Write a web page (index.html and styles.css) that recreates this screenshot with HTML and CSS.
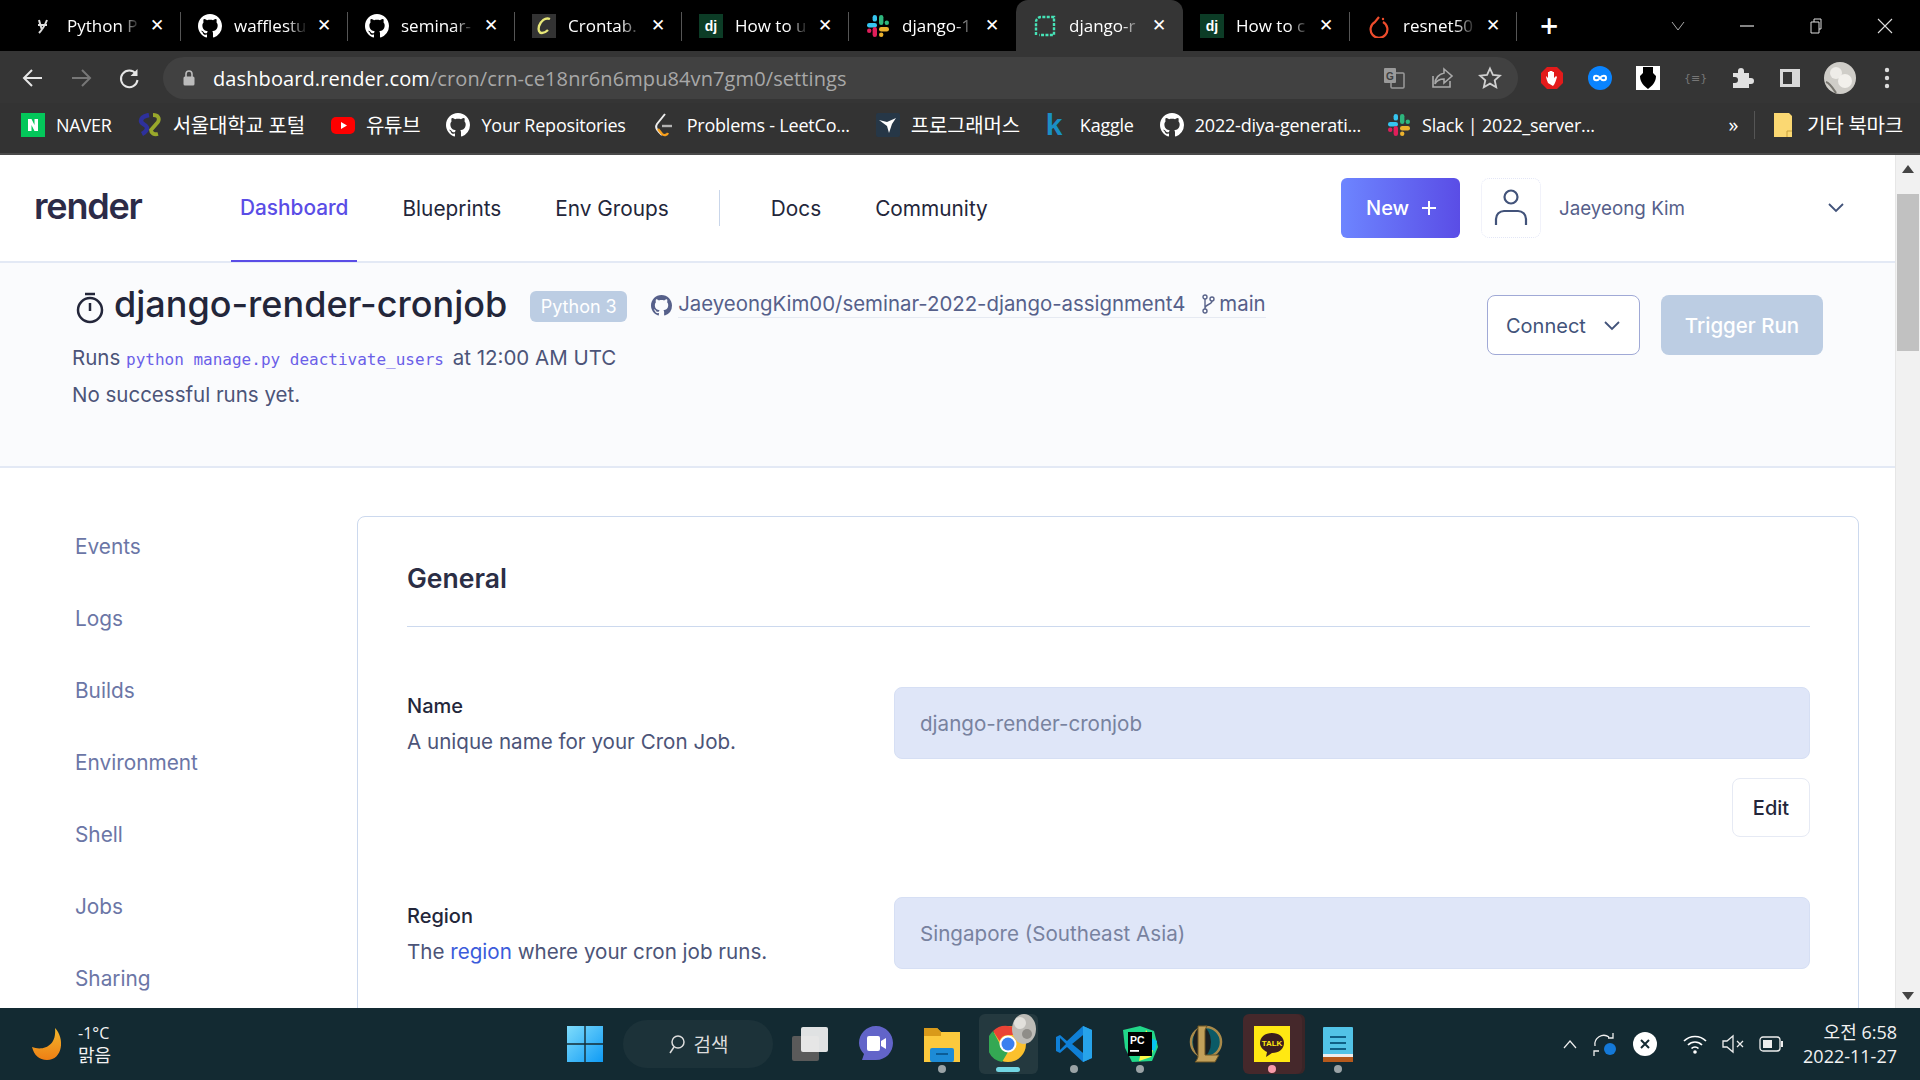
FILE: index.html
```html
<!DOCTYPE html><html lang="en">
<head>
  <title>django-render-cronjob</title>
  <meta charset="UTF-8">
  <link rel="stylesheet" href="styles.css">
</head>
<body>
<svg class="defs" width="0" height="0">
  <symbol id="gh" viewBox="0 0 16 16"><path fill="currentColor" d="M8 0C3.58 0 0 3.58 0 8c0 3.54 2.29 6.53 5.47 7.59.4.07.55-.17.55-.38 0-.19-.01-.82-.01-1.49-2.01.37-2.53-.49-2.69-.94-.09-.23-.48-.94-.82-1.13-.28-.15-.68-.52-.01-.53.63-.01 1.08.58 1.23.82.72 1.21 1.87.87 2.33.66.07-.52.28-.87.51-1.07-1.78-.2-3.64-.89-3.64-3.95 0-.87.31-1.59.82-2.15-.08-.2-.36-1.02.08-2.12 0 0 .67-.21 2.2.82.64-.18 1.32-.27 2-.27.68 0 1.36.09 2 .27 1.53-1.04 2.2-.82 2.2-.82.44 1.1.16 1.92.08 2.12.51.56.82 1.27.82 2.15 0 3.07-1.87 3.75-3.65 3.95.29.25.54.73.54 1.48 0 1.07-.01 1.93-.01 2.2 0 .21.15.46.55.38A8.013 8.013 0 0016 8c0-4.42-3.58-8-8-8z"/></symbol>
  <symbol id="slack" viewBox="0 0 24 24">
    <rect x="1" y="9" width="10" height="4.4" rx="2.2" fill="#36c5f0"/><rect x="6.6" y="1" width="4.4" height="6.6" rx="2.2" fill="#36c5f0"/>
    <rect x="13" y="1" width="4.4" height="10" rx="2.2" fill="#2eb67d"/><rect x="18.6" y="6.6" width="4.4" height="4.4" rx="2.2" fill="#2eb67d"/>
    <rect x="13" y="13" width="10" height="4.4" rx="2.2" fill="#ecb22e"/><rect x="13" y="18.6" width="4.4" height="4.4" rx="2.2" fill="#ecb22e"/>
    <rect x="6.6" y="13" width="4.4" height="10" rx="2.2" fill="#e01e5a"/><rect x="1" y="14.6" width="4.4" height="4.4" rx="2.2" fill="#e01e5a"/>
  </symbol>
</svg>

<div class="tabstrip">
  <div class="tab">
    <svg class="fav" viewBox="0 0 24 24"><path d="M8 6c1 4 2 7 3 10M16 6c-2 5-5 10-8 13M7 11h9" fill="none" stroke="#ddd" stroke-width="2"/></svg>
    <span class="tab-title">Python P</span><span class="tab-x">✕</span>
  </div>
  <div class="tab">
    <svg class="fav gh"><use href="#gh"/></svg>
    <span class="tab-title">wafflestu</span><span class="tab-x">✕</span>
  </div>
  <div class="tab">
    <svg class="fav gh"><use href="#gh"/></svg>
    <span class="tab-title">seminar-</span><span class="tab-x">✕</span>
  </div>
  <div class="tab">
    <svg class="fav" viewBox="0 0 24 24"><rect width="24" height="24" fill="#333"/><path d="M18 5c-5-2-9 2-11 7-1 4 0 7 3 7 3 0 5-2 6-3" fill="none" stroke="#e8e878" stroke-width="2.4"/></svg>
    <span class="tab-title">Crontab.</span><span class="tab-x">✕</span>
  </div>
  <div class="tab">
    <svg class="fav" viewBox="0 0 24 24"><rect width="24" height="24" fill="#0c3c26"/><text x="12" y="17" text-anchor="middle" font-family="Liberation Sans" font-weight="700" font-size="14" fill="#fff">dj</text></svg>
    <span class="tab-title">How to u</span><span class="tab-x">✕</span>
  </div>
  <div class="tab tab-noline">
    <svg class="fav"><use href="#slack"/></svg>
    <span class="tab-title">django-1</span><span class="tab-x">✕</span>
  </div>
  <div class="tab tab-active">
    <svg class="fav" viewBox="0 0 24 24"><path d="M3 21V8a5 5 0 015-5h13v18H6" fill="none" stroke="#46e3b7" stroke-width="2.4" stroke-dasharray="3 1.4"/></svg>
    <span class="tab-title">django-r</span><span class="tab-x">✕</span>
  </div>
  <div class="tab">
    <svg class="fav" viewBox="0 0 24 24"><rect width="24" height="24" fill="#0c3c26"/><text x="12" y="17" text-anchor="middle" font-family="Liberation Sans" font-weight="700" font-size="14" fill="#fff">dj</text></svg>
    <span class="tab-title">How to c</span><span class="tab-x">✕</span>
  </div>
  <div class="tab">
    <svg class="fav" viewBox="0 0 24 24"><path d="M16 8a8.4 8.4 0 11-8 0l4-5" fill="none" stroke="#ee4c2c" stroke-width="2.2"/><circle cx="16" cy="5" r="1.2" fill="#ee4c2c"/></svg>
    <span class="tab-title">resnet50</span><span class="tab-x">✕</span>
  </div>
  <div class="tab-plus">+</div>
  <div class="win-btns">
    <svg width="18" height="18" viewBox="0 0 18 18"><path d="M3 5l6 8 6-8" fill="none" stroke="#aaa"/></svg>
    <svg width="18" height="18" viewBox="0 0 18 18"><path d="M2 9h14" stroke="#ddd" stroke-width="1.2"/></svg>
    <svg width="18" height="18" viewBox="0 0 18 18"><path d="M4 5h8v11H4zM7 5V2h7v10h-2" fill="none" stroke="#ddd"/></svg>
    <svg width="18" height="18" viewBox="0 0 18 18"><path d="M2 2l14 14M16 2L2 16" stroke="#ddd" stroke-width="1.1"/></svg>
  </div>
</div>

<div class="toolbar">
  <svg class="tool" viewBox="0 0 24 24"><path d="M21 12H4m7-8l-8 8 8 8" fill="none" stroke="#e6e6e6" stroke-width="2"/></svg>
  <svg class="tool" viewBox="0 0 24 24"><path d="M3 12h17m-7-8l8 8-8 8" fill="none" stroke="#777" stroke-width="2"/></svg>
  <svg class="tool" viewBox="0 0 24 24"><path d="M19 8a8.3 8.3 0 101.5 6" fill="none" stroke="#e6e6e6" stroke-width="2"/><path d="M20.5 3v7h-7z" fill="#e6e6e6"/></svg>
  <div class="omnibox">
    <svg class="lock" viewBox="0 0 14 18"><path d="M4 8V5a3 3 0 016 0v3" fill="none" stroke="#bbb" stroke-width="1.6"/><rect x="1.5" y="7.5" width="11" height="9" rx="1.5" fill="#bbb"/></svg>
    <span class="url"><b>dashboard.render.com</b>/cron/crn-ce18nr6n6mpu84vn7gm0/settings</span>
    <svg class="omni-icon" viewBox="0 0 24 24"><rect x="2" y="2" width="12" height="15" rx="1" fill="#9a9a9a"/><rect x="9" y="7" width="13" height="15" rx="1" fill="none" stroke="#9a9a9a" stroke-width="1.5"/><text x="8" y="14" font-size="10" font-family="Liberation Sans" font-weight="700" text-anchor="middle" fill="#404040">G</text></svg>
    <svg class="omni-icon" viewBox="0 0 24 24"><path d="M3 10v11h17v-6" fill="none" stroke="#aaa" stroke-width="1.6"/><path d="M14 3l8 7-8 7v-4c-4 0-7 1-9 5 0-6 4-10 9-11z" fill="none" stroke="#aaa" stroke-width="1.6"/></svg>
    <svg class="omni-icon" viewBox="0 0 24 24"><path d="M12 2.5l2.9 6.4 7 .7-5.2 4.7 1.5 6.9-6.2-3.6-6.2 3.6 1.5-6.9L2.100 9.600l7-.7z" fill="none" stroke="#d0d0d0" stroke-width="1.8"/></svg>
  </div>
  <div class="ext-icons">
    <svg class="ext" viewBox="0 0 24 24"><path d="M7 1h10l6 6v10l-6 6H7l-6-6V7z" fill="#e31b1b"/><path d="M8 17c-1-3-2-5-2-7l2 2V6h1.500v4-5H11v5-5h1.500v5-4H14v6l2-2 1 1c-1 3-2 7-4 9z" fill="#fff"/></svg>
    <svg class="ext" viewBox="0 0 24 24"><circle cx="12" cy="12" r="12" fill="#0a84ff"/><path d="M12 12c-2-3-6-3-6 0s4 3 6 0 6-3 6 0-4 3-6 0z" fill="none" stroke="#fff" stroke-width="2"/></svg>
    <svg class="ext" viewBox="0 0 24 24"><rect width="24" height="24" fill="#fff"/><path d="M7 1h10v6l3 3c0 6-4 10-8 13-4-3-8-7-8-13l3-3z" fill="#000"/></svg>
    <span class="ext-json">{≡}</span>
    <svg class="ext" viewBox="0 0 24 24"><path d="M3 7h5V5a3 3 0 016 0v2h5v5h2a3 3 0 010 6h-2v4H3v-5h2a3 3 0 000-6H3z" fill="#e0e0e0"/></svg>
    <svg class="ext" viewBox="0 0 24 24"><rect x="2" y="3" width="20" height="18" fill="#d8d8d8"/><rect x="5" y="6" width="9" height="12" fill="#353535"/></svg>
    <svg class="ext-avatar" viewBox="0 0 32 32"><circle cx="16" cy="16" r="16" fill="#cfcdc8"/><circle cx="12" cy="11" r="6" fill="#eeece8"/><circle cx="21" cy="19" r="7" fill="#f2f0ec"/><path d="M2 20c4 1 8 8 10 11" stroke="#77756f" stroke-width="2" fill="none"/></svg>
    <svg class="ext-dots" viewBox="0 0 6 24"><circle cx="3" cy="4" r="2.200" fill="#ddd"/><circle cx="3" cy="12" r="2.200" fill="#ddd"/><circle cx="3" cy="20" r="2.200" fill="#ddd"/></svg>
  </div>
</div>

<div class="bookmarks">
  <div class="bm"><svg class="bm-icon" viewBox="0 0 24 24"><rect width="24" height="24" fill="#03c75a"/><path d="M7 6h3.500l3 6V6H17v12h-3.500l-3-6v6H7z" fill="#fff"/></svg>NAVER</div>
  <div class="bm"><svg class="bm-icon" viewBox="0 0 24 24"><path d="M11 2C6 3 3 5 3 8s6 4 6 7-3 5-5 6" fill="none" stroke="#2e319c" stroke-width="4.500"/><path d="M15 2c5 0 7 3 5 7l-7 8c0 3 3 5 7 4" fill="none" stroke="#99a82b" stroke-width="3.800"/></svg><span class="ko">서울대학교 포털</span></div>
  <div class="bm"><svg class="bm-icon" viewBox="0 0 24 24"><rect y="4" width="24" height="17" rx="5" fill="#f00"/><path d="M10 9l6 3.500-6 3.500z" fill="#fff"/></svg><span class="ko">유튜브</span></div>
  <div class="bm"><svg class="bm-icon gh"><use href="#gh"/></svg>Your Repositories</div>
  <div class="bm"><svg class="bm-icon" viewBox="0 0 24 24"><path d="M13 1L5 11c-2 3 0 6 2 8l3 3" fill="none" stroke="#eee" stroke-width="2"/><path d="M6 16l4 5c2 2 5 1 6-1" fill="none" stroke="#f89f1b" stroke-width="2.400"/><path d="M10 13h10" stroke="#b3b3b3" stroke-width="2.400"/></svg>Problems - LeetCo...</div>
  <div class="bm"><svg class="bm-icon" viewBox="0 0 24 24"><rect width="24" height="24" rx="2" fill="#263747"/><path d="M3 7l8 2 9-4-4 6-3 9-2-7z" fill="#fff"/></svg><span class="ko">프로그래머스</span></div>
  <div class="bm bm-kaggle"><span class="kaggle">k</span>Kaggle</div>
  <div class="bm"><svg class="bm-icon gh"><use href="#gh"/></svg>2022-diya-generati...</div>
  <div class="bm"><svg class="bm-icon"><use href="#slack"/></svg>Slack | 2022_server...</div>
  <div class="bm-end">
    <span class="bm-more">»</span>
    <div class="bm bm-other"><svg class="bm-folder" viewBox="0 0 18 24"><path d="M0 0h15l3 3v21H0z" fill="#fbd872"/><path d="M13 24v-6h5" fill="none" stroke="#c8a13d"/></svg><span class="ko">기타 북마크</span></div>
  </div>
</div>

<div class="viewport">
  <div class="page">
    <header class="topnav">
      <div class="logo">render</div>
      <nav class="nav">
        <a class="nav-link nav-active">Dashboard</a>
        <a class="nav-link">Blueprints</a>
        <a class="nav-link">Env Groups</a>
        <span class="nav-sep"></span>
        <a class="nav-link">Docs</a>
        <a class="nav-link">Community</a>
      </nav>
      <button class="btn-new">New <svg width="16" height="16" viewBox="0 0 16 16"><path d="M8 1v14M1 8h14" stroke="#fff" stroke-width="2"/></svg></button>
      <div class="avatar"><svg width="34" height="38" viewBox="0 0 34 38"><circle cx="17" cy="8" r="6.500" fill="none" stroke="#42537a" stroke-width="2.200"/><path d="M2 36v-6a8 8 0 018-8h14a8 8 0 018 8v6" fill="none" stroke="#42537a" stroke-width="2.200"/></svg></div>
      <div class="user-name">Jaeyeong Kim</div>
      <svg class="user-chev" width="16" height="10" viewBox="0 0 16 10"><path d="M1 1l7 7 7-7" fill="none" stroke="#42537a" stroke-width="1.800"/></svg>
    </header>

    <section class="service-head">
      <div class="service-main">
        <div class="title-row">
          <svg class="watch" width="28" height="34" viewBox="0 0 28 34"><path d="M9 3h10" stroke="#23263a" stroke-width="2.500"/><circle cx="14" cy="19" r="12" fill="none" stroke="#23263a" stroke-width="2.500"/><path d="M14 12v8" stroke="#23263a" stroke-width="2.500"/></svg>
          <h1 class="service-title">django-render-cronjob</h1>
          <span class="badge">Python 3</span>
          <a class="repo">
            <svg class="repo-gh"><use href="#gh"/></svg>
            <span class="repo-text">JaeyeongKim00/seminar-2022-django-assignment4
              <svg class="branch" width="13" height="20" viewBox="0 0 13 20"><circle cx="3" cy="3" r="2" fill="none" stroke="#586289" stroke-width="1.400"/><circle cx="10" cy="5" r="2" fill="none" stroke="#586289" stroke-width="1.400"/><circle cx="3" cy="17" r="2" fill="none" stroke="#586289" stroke-width="1.400"/><path d="M3 5v10M10 7c0 4-7 3-7 7" fill="none" stroke="#586289" stroke-width="1.400"/></svg>main</span>
          </a>
        </div>
        <p class="service-line">Runs <code class="cmd">python manage.py deactivate_users</code> at 12:00 AM UTC</p>
        <p class="service-line">No successful runs yet.</p>
      </div>
      <div class="service-actions">
        <button class="btn-connect">Connect <svg width="16" height="10" viewBox="0 0 16 10"><path d="M1 1l7 7 7-7" fill="none" stroke="#42537a" stroke-width="1.800"/></svg></button>
        <button class="btn-trigger">Trigger Run</button>
      </div>
    </section>

    <div class="content">
      <aside class="side">
        <a class="side-link">Events</a>
        <a class="side-link">Logs</a>
        <a class="side-link">Builds</a>
        <a class="side-link">Environment</a>
        <a class="side-link">Shell</a>
        <a class="side-link">Jobs</a>
        <a class="side-link">Sharing</a>
      </aside>
      <main class="card">
        <h2 class="card-title">General</h2>
        <div class="field">
          <div class="field-info">
            <div class="field-label">Name</div>
            <div class="field-desc">A unique name for your Cron Job.</div>
          </div>
          <div class="field-control">
            <div class="input">django-render-cronjob</div>
            <button class="btn-edit">Edit</button>
          </div>
        </div>
        <div class="field">
          <div class="field-info">
            <div class="field-label">Region</div>
            <div class="field-desc">The <a class="inline-link">region</a> where your cron job runs.</div>
          </div>
          <div class="field-control">
            <div class="input">Singapore (Southeast Asia)</div>
          </div>
        </div>
      </main>
    </div>
  </div>
  <div class="scrollbar">
    <svg class="scroll-arrow" width="12" height="8" viewBox="0 0 12 8"><path d="M6 0l6 8H0z" fill="#444"/></svg>
    <div class="scroll-thumb"></div>
    <svg class="scroll-arrow scroll-down" width="12" height="8" viewBox="0 0 12 8"><path d="M6 8l6-8H0z" fill="#444"/></svg>
  </div>
</div>

<footer class="taskbar">
  <div class="weather">
    <svg width="34" height="34" viewBox="0 0 34 34"><defs><linearGradient id="moon" x1="0" y1="0" x2="0" y2="1"><stop offset="0" stop-color="#f3b72c"/><stop offset="1" stop-color="#ee7f14"/></linearGradient></defs><path d="M23 1c10 10 8 32-8 32C7 33 2 28 0 20c10 4 25 0 23-19z" fill="url(#moon)"/></svg>
    <div class="weather-text"><div>-1°C</div><div class="ko">맑음</div></div>
  </div>
  <div class="task-center">
    <div class="slot">
      <svg width="36" height="36" viewBox="0 0 36 36"><defs><linearGradient id="win" x1="0" y1="0" x2="1" y2="1"><stop offset="0" stop-color="#7fdcfb"/><stop offset="1" stop-color="#0f9bf5"/></linearGradient></defs><path d="M0 0h17.300v17.300H0zM18.700 0H36v17.300H18.700zM0 18.700h17.300V36H0zM18.700 18.700H36V36H18.700z" fill="url(#win)"/></svg>
    </div>
    <div class="search"><svg width="18" height="20" viewBox="0 0 18 20"><circle cx="10" cy="8" r="6" fill="none" stroke="#ddd" stroke-width="1.500"/><path d="M6 13l-4 6" stroke="#ddd" stroke-width="1.500"/></svg>검색</div>
    <div class="slot slot-taskview">
      <svg width="36" height="34" viewBox="0 0 36 34"><rect x="0" y="9" width="27" height="25" rx="2" fill="#5a5a5a"/><rect x="9" y="0" width="27" height="25" rx="2" fill="#f2f2f2" fill-opacity=".92"/></svg>
    </div>
    <div class="slot">
      <svg width="34" height="36" viewBox="0 0 34 36"><path d="M17 0c10 0 17 8 17 17s-7 17-17 17H3l2-6C2 25 0 21 0 17 0 8 7 0 17 0z" fill="#6264c9"/><rect x="8" y="10" width="13" height="15" rx="2" fill="#fff"/><path d="M22 15l5-3v11l-5-3z" fill="#fff"/></svg>
    </div>
    <div class="slot">
      <svg width="36" height="36" viewBox="0 0 36 36"><path d="M0 2h13l4 4h19v30H0z" fill="#fcc93d"/><path d="M0 2h13l4 4v4H0z" fill="#d99a1a"/><rect x="6" y="22" width="24" height="14" rx="2" fill="#1d8bd6"/><rect x="12" y="27" width="12" height="2" fill="#0b5c96"/></svg>
      <i class="dot"></i>
    </div>
    <div class="slot slot-on">
      <svg class="chrome" width="38" height="38" viewBox="0 0 38 38"><circle cx="19" cy="19" r="18" fill="#fbc02d"/><path d="M19 1a18 18 0 0115.600 9H19a9 9 0 00-8.500 6L4 6a18 18 0 0115-5z" fill="#ea4335"/><path d="M4 6l8 15a8 8 0 007 6l-6 10A18 18 0 014 6z" fill="#34a853"/><circle cx="19" cy="19" r="8.500" fill="#fff"/><circle cx="19" cy="19" r="6.500" fill="#3b80f0"/></svg>
      <svg class="chrome-badge" width="24" height="30" viewBox="0 0 24 30"><ellipse cx="12" cy="15" rx="12" ry="15" fill="#bdbbb6"/><circle cx="8" cy="9" r="6" fill="#e2e0db"/><circle cx="15" cy="20" r="5" fill="#8f8d88"/></svg>
      <i class="bar"></i>
    </div>
    <div class="slot">
      <svg width="38" height="38" viewBox="0 0 38 38"><path d="M28 1l9 4v28l-9 4-16-15-7 6-4-2v-14l4-2 7 6z" fill="#0f7fd6"/><path d="M28 1l9 4v28l-9 4zM28 10L17 19l11 9z" fill="#27a3ea"/><path d="M28 10v18l-11-9z" fill="#132a32"/><path d="M5 13l6 6-6 6z" fill="#132a32"/></svg>
      <i class="dot"></i>
    </div>
    <div class="slot">
      <svg width="38" height="38" viewBox="0 0 38 38"><path d="M2 5l17-4 14 5 4 16-6 14-20 1-7-14z" fill="#21d789"/><path d="M25 5l9 13-4 14-12 4z" fill="#fcf84a"/><path d="M28 12l8 4-2 10-6-2z" fill="#07c3f2"/><rect x="7" y="7" width="24" height="24" fill="#000"/><text x="9" y="19" font-family="Liberation Sans" font-weight="700" font-size="10.500" fill="#fff">PC</text><rect x="9" y="25" width="9" height="1.800" fill="#fff"/></svg>
      <i class="dot"></i>
    </div>
    <div class="slot">
      <svg width="34" height="38" viewBox="0 0 34 38"><ellipse cx="17" cy="17" rx="15" ry="15" fill="#0b5a66" stroke="#a98a4a" stroke-width="2.500"/><ellipse cx="13" cy="17" rx="9" ry="15" fill="#1a1f22"/><path d="M9 1h9c-1 2-2 3-2 5v24h14l-4 7H6c2-2 3-4 3-6z" fill="#c2a05a" stroke="#6d5423"/></svg>
    </div>
    <div class="slot slot-alert">
      <svg width="36" height="36" viewBox="0 0 36 36"><rect width="36" height="36" fill="#ffe812"/><path d="M18 7c7 0 12 4 12 10s-5 10-12 10l-6 4 1-5c-4-2-7-5-7-9C6 11 11 7 18 7z" fill="#3b1e1e"/><text x="18" y="20" text-anchor="middle" font-family="Liberation Sans" font-weight="700" font-size="8" fill="#ffe812">TALK</text></svg>
      <i class="dot dot-alert"></i>
    </div>
    <div class="slot">
      <svg width="30" height="36" viewBox="0 0 30 36"><rect y="1" width="30" height="35" rx="1" fill="#52c3e7"/><rect y="31" width="30" height="5" fill="#b5591c"/><rect y="28" width="30" height="3" fill="#eee"/><path d="M7 11h16M7 17h16M7 23h16" stroke="#0f5f86" stroke-width="2.200"/></svg>
      <i class="dot"></i>
    </div>
  </div>
  <div class="tray">
    <svg width="14" height="9" viewBox="0 0 14 9"><path d="M1 8l6-7 6 7" fill="none" stroke="#eee" stroke-width="1.200"/></svg>
    <svg width="26" height="26" viewBox="0 0 26 26"><path d="M3 15a9 9 0 0114-9M21 2v5h-5M2 25v-5h5" fill="none" stroke="#eee" stroke-width="1.300"/><circle cx="18" cy="18" r="6" fill="#1479d8"/></svg>
    <svg width="24" height="24" viewBox="0 0 24 24"><circle cx="12" cy="12" r="12" fill="#fff"/><path d="M8 8l8 8M16 8l-8 8" stroke="#132a32" stroke-width="2"/></svg>
    <svg class="tray-wifi" width="24" height="20" viewBox="0 0 24 20"><path d="M1 7c6-6 16-6 22 0M5 11c4-4 10-4 14 0M8.500 14.500c2-2 5-2 7 0" fill="none" stroke="#fff" stroke-width="1.700"/><circle cx="12" cy="18" r="1.800" fill="#fff"/></svg>
    <svg width="22" height="20" viewBox="0 0 22 20"><path d="M1 7h4l6-5v16l-6-5H1z" fill="none" stroke="#eee" stroke-width="1.300"/><path d="M15 7l6 6M21 7l-6 6" stroke="#eee" stroke-width="1.300"/></svg>
    <svg width="24" height="16" viewBox="0 0 24 16"><rect x="1" y="1" width="20" height="14" rx="3" fill="none" stroke="#eee" stroke-width="1.300"/><rect x="4" y="4" width="9" height="8" fill="#eee"/><rect x="22" y="5" width="2" height="6" fill="#eee"/></svg>
    <div class="clock"><div>오전 6:58</div><div>2022-11-27</div></div>
  </div>
</footer>
</body>
</html>
```

FILE: styles.css
```css
* {
  box-sizing: border-box;
}
html, body {
  margin: 0;
  height: 100%;
}
body {
  display: flex;
  flex-direction: column;
  width: 1920px;
  height: 1080px;
  overflow: hidden;
  font-family: Inter, "Noto Sans CJK KR", sans-serif;
  background: #fff;
}
button {
  font-family: inherit;
  cursor: pointer;
}
.defs {
  position: absolute;
}

/* browser chrome */
.tabstrip {
  display: flex;
  align-items: center;
  flex: 0 0 51px;
  padding-left: 14px;
  background: #000;
  color: #fff;
  font-family: "Open Sans", "Noto Sans CJK KR", sans-serif;
  font-size: 17px;
}
.tab {
  display: flex;
  align-items: center;
  width: 167px;
  height: 51px;
  padding: 0 10px 0 17px;
  position: relative;
}
.tab::after {
  content: "";
  position: absolute;
  right: 0;
  top: 12px;
  height: 29px;
  border-right: 1px solid #555;
}
.tab-noline::after, .tab-active::after {
  display: none;
}
.tab-active {
  background: #353535;
  border-radius: 12px 12px 0 0;
}
.fav {
  width: 24px;
  height: 24px;
  flex: none;
}
.gh {
  color: #fff;
}
.tab-title {
  width: 75px;
  margin-left: 12px;
  overflow: hidden;
  white-space: nowrap;
  -webkit-mask-image: linear-gradient(to right, #000 70%, transparent 98%);
  mask-image: linear-gradient(to right, #000 70%, transparent 98%);
}
.tab-x {
  margin-left: 8px;
  font-size: 17px;
  font-weight: 700;
  line-height: 1;
  font-family: "DejaVu Sans", sans-serif;
}
.tab-plus {
  margin-left: 23px;
  font-size: 32px;
  line-height: 1;
  font-weight: 600;
}
.win-btns {
  display: flex;
  gap: 51px;
  margin-left: auto;
  margin-right: 26px;
}

.toolbar {
  display: flex;
  align-items: center;
  flex: 0 0 52px;
  padding: 2px 0 0 21px;
  gap: 24px;
  background: #353535;
}
.tool {
  width: 24px;
  height: 24px;
  flex: none;
}
.omnibox {
  display: flex;
  align-items: center;
  width: 1355px;
  height: 42px;
  margin-left: -2px;
  margin-right: -2px;
  padding: 0 16px 0 19px;
  background: #414141;
  border-radius: 21px;
  color: #a8a8a8;
  font-family: "Open Sans", sans-serif;
  font-size: 20px;
}
.lock {
  width: 14px;
  height: 18px;
  margin-right: 17px;
}
.url {
  flex: 1;
  letter-spacing: 0.1px;
  white-space: nowrap;
}
.url b {
  font-weight: 400;
  color: #fff;
}
.omni-icon {
  width: 24px;
  height: 24px;
  margin-left: 24px;
}
.ext-icons {
  display: flex;
  align-items: center;
  gap: 24px;
}
.ext {
  width: 24px;
  height: 24px;
  flex: none;
}
.ext-json {
  width: 22px;
  color: #777;
  font: 11px "DejaVu Sans", sans-serif;
  text-align: center;
}
.ext-avatar {
  width: 32px;
  height: 32px;
  margin-left: -2px;
  margin-right: -6px;
}
.ext-dots {
  width: 6px;
  height: 24px;
  margin-left: 10px;
}

.bookmarks {
  display: flex;
  align-items: center;
  flex: 0 0 52px;
  padding: 0 17px 7px 21px;
  gap: 26px;
  background: #333;
  border-bottom: 2px solid #4a4a4a;
  color: #fff;
  font-family: "Open Sans", "Noto Sans CJK KR", sans-serif;
  font-size: 18px;
  letter-spacing: -0.22px;
}
.bm {
  display: flex;
  align-items: center;
  gap: 11px;
  white-space: nowrap;
}
.ko {
  font-size: 20px;
}
.bm-icon {
  width: 24px;
  height: 24px;
  flex: none;
}
.kaggle {
  width: 17px;
  color: #1a8fc4;
  font: 700 30px "Liberation Sans", sans-serif;
  line-height: 24px;
}
.bm-kaggle {
  gap: 17px;
}
.bm-end {
  display: flex;
  align-items: center;
  margin-left: auto;
}
.bm-more {
  font-size: 20px;
  padding-right: 16px;
  border-right: 1px solid #555;
  line-height: 28px;
}
.bm-other {
  margin-left: 19px;
  gap: 15px;
}
.bm-folder {
  width: 18px;
  height: 24px;
}

/* page */
.viewport {
  display: flex;
  flex: 1;
  min-height: 0;
  overflow: hidden;
}
.page {
  flex: 1;
  min-width: 0;
  color: #23263a;
}
.topnav {
  display: flex;
  align-items: center;
  height: 108px;
  padding: 0 51px 0 34px;
  border-bottom: 2px solid #e3e9f5;
}
.logo {
  width: 197px;
  font-size: 36px;
  font-weight: 600;
  letter-spacing: -1.2px;
  color: #2c2b48;
  margin-top: -5px;
}
.nav {
  display: flex;
  align-items: center;
  height: 107px;
  flex: 1;
}
.nav-link {
  display: flex;
  align-items: center;
  height: 107px;
  padding: 0 27px;
  font-size: 20.8px;
  color: #23263a;
}
.nav-active {
  padding: 0 9px;
  margin-right: 18px;
  color: #5a4de6;
  font-weight: 500;
  border-bottom: 2px solid #5a4de6;
}
.nav-sep {
  height: 36px;
  margin: 0 24px 0 23px;
  border-left: 1px solid #c9d6ea;
}
.btn-new {
  display: flex;
  align-items: center;
  gap: 12px;
  height: 60px;
  width: 119px;
  margin-left: -1px;
  padding: 0 0 0 25px;
  border: 0;
  border-radius: 6px;
  background: linear-gradient(to right, #6d85ff, #5a4de6);
  color: #fff;
  font-size: 20px;
  font-weight: 500;
}
.avatar {
  display: flex;
  align-items: center;
  justify-content: center;
  width: 60px;
  height: 60px;
  margin-left: 21px;
  border: 1px dotted #e3e6f6;
  border-radius: 8px;
}
.user-name {
  width: 269px;
  margin-left: 18px;
  font-size: 18.8px;
  color: #56608a;
}
.user-chev {
  flex: none;
}

.service-head {
  display: flex;
  justify-content: space-between;
  height: 205px;
  padding: 18px 72px 0 72px;
  background: #fafbfd;
  border-bottom: 2px solid #e3e9f5;
}
.title-row {
  display: flex;
  align-items: center;
  height: 46px;
}
.watch {
  margin: 8px 10px 0 4px;
  flex: none;
}
.service-title {
  margin: 0;
  font-size: 36px;
  font-weight: 500;
  line-height: 46px;
  color: #23263a;
}
.badge {
  display: flex;
  align-items: center;
  justify-content: center;
  width: 97px;
  height: 31px;
  margin: 4px 0 0 23px;
  background: #bccde3;
  border-radius: 6px;
  color: #fff;
  font-size: 18px;
}
.repo {
  display: flex;
  align-items: center;
  margin-left: 24px;
  color: #56608a;
  font-size: 20.4px;
}
.repo-gh {
  width: 21px;
  height: 21px;
  color: #56608a;
  margin: 2px 6px 0 0;
}
.repo-text {
  display: flex;
  align-items: center;
  gap: 4px;
  padding-bottom: 1px;
  border-bottom: 1px solid #e6eaf2;
  white-space: nowrap;
}
.branch {
  margin: 2px 0 0 13px;
}
.service-line {
  margin: 0;
  font-size: 20.5px;
  line-height: 35px;
  color: #4c5478;
}
.title-row + .service-line {
  margin-top: 13px;
}
.cmd {
  margin-right: 3px;
  font-family: "DejaVu Sans Mono", monospace;
  font-size: 16px;
  color: #6b5fe8;
}
.service-actions {
  display: flex;
  gap: 21px;
  padding-top: 14px;
}
.btn-connect {
  display: flex;
  align-items: center;
  gap: 18px;
  width: 153px;
  height: 60px;
  padding: 1px 0 0 18px;
  background: #fff;
  border: 1px solid #a0a9d6;
  border-radius: 8px;
  color: #42537a;
  font-size: 20px;
}
.btn-trigger {
  width: 162px;
  height: 60px;
  background: #bccde3;
  border: 0;
  border-radius: 8px;
  color: #fff;
  font-size: 20.5px;
  font-weight: 500;
}

.content {
  display: flex;
  padding: 48px 36px 0 75px;
}
.side {
  display: flex;
  flex-direction: column;
  gap: 48px;
  width: 282px;
  flex: none;
  padding-top: 19px;
}
.side-link {
  font-size: 20.8px;
  line-height: 24px;
  color: #6b76a6;
}
.card {
  flex: 1;
  padding: 0 48px 0 49px;
  border: 1px solid #ccd9ee;
  border-radius: 8px;
  height: 700px;
}
.card-title {
  margin: 0;
  height: 110px;
  padding-top: 43px;
  font-size: 26.5px;
  font-weight: 600;
  line-height: 36px;
  color: #2b2e45;
  border-bottom: 1px solid #ccd9ee;
}
.field {
  display: flex;
  margin-top: 60px;
  margin-bottom: -12px;
}
.field + .field {
  margin-top: 72px;
}
.field-info {
  width: 487px;
  padding-top: 7px;
  flex: none;
}
.field-label {
  font-size: 20px;
  font-weight: 500;
  line-height: 24px;
  color: #23263a;
}
.field-desc {
  margin-top: 12px;
  font-size: 20.6px;
  line-height: 24px;
  color: #4c5478;
}
.inline-link {
  color: #3b5bdb;
}
.field-control {
  display: flex;
  flex-direction: column;
  align-items: flex-end;
  flex: 1;
}
.input {
  width: 100%;
  height: 72px;
  padding: 0 25px;
  background: #dfe6f8;
  border: 1px solid #d6dff4;
  border-radius: 8px;
  line-height: 72px;
  font-size: 20.6px;
  color: #78829f;
}
.btn-edit {
  width: 78px;
  height: 59px;
  margin-top: 19px;
  background: #fff;
  border: 1px solid #e6eaf4;
  border-radius: 8px;
  color: #23263a;
  font-size: 20px;
  font-weight: 500;
}

.scrollbar {
  position: relative;
  flex: 0 0 25px;
  background: #f1f1f1;
  border-left: 1px solid #e6e6e6;
}
.scroll-arrow {
  display: block;
  margin: 10px auto 0;
}
.scroll-down {
  position: absolute;
  left: 6px;
  bottom: 8px;
  margin: 0;
}
.scroll-thumb {
  height: 157px;
  margin: 21px 1px 0 1px;
  background: #c1c1c1;
}

/* windows taskbar */
.taskbar {
  display: flex;
  align-items: center;
  flex: 0 0 72px;
  background: #132a32;
  color: #f2f2f2;
  font-size: 16px;
  font-family: "Open Sans", "Noto Sans CJK KR", sans-serif;
}
.weather {
  display: flex;
  align-items: center;
  gap: 12px;
  width: 552px;
  padding-left: 32px;
}
.weather-text {
  line-height: 22px;
  font-size: 16px;
}
.weather-text .ko {
  font-size: 18px;
}
.task-center {
  display: flex;
  align-items: center;
  flex: 1;
}
.slot {
  position: relative;
  display: flex;
  align-items: center;
  justify-content: center;
  width: 66px;
  height: 60px;
  flex: none;
}
.slot svg {
  position: relative;
}
.search {
  display: flex;
  align-items: center;
  justify-content: center;
  gap: 8px;
  width: 150px;
  height: 48px;
  margin-left: 5px;
  background: #1c3239;
  border-radius: 24px;
  font-size: 19px;
  color: #ddd;
}
.slot-taskview {
  margin-left: 4px;
}
.slot-on::before, .slot-alert::before {
  content: "";
  position: absolute;
  top: 0;
  bottom: 0;
  left: 4px;
  right: 3px;
  border-radius: 6px;
  background: #24393f;
}
.slot-alert::before {
  background: #45282b;
  box-shadow: 3px 0 0 #3b2527;
}
.dot, .bar {
  position: absolute;
  bottom: 1px;
  left: 50%;
  width: 8px;
  height: 8px;
  margin-left: -4px;
  border-radius: 50%;
  background: #9aa3a6;
}
.bar {
  width: 24px;
  height: 5px;
  margin-left: -12px;
  bottom: 2px;
  border-radius: 3px;
  background: #72d5e2;
}
.dot-alert {
  background: #f79aa9;
}
.slot .chrome-badge {
  position: absolute;
  top: 0;
  right: 5px;
}
.tray {
  display: flex;
  align-items: center;
  gap: 15px;
  padding-right: 23px;
}
.tray-wifi {
  margin-left: 11px;
}
.clock {
  margin-left: 5px;
  text-align: right;
  font-size: 18px;
  line-height: 24px;
  white-space: nowrap;
}
```
